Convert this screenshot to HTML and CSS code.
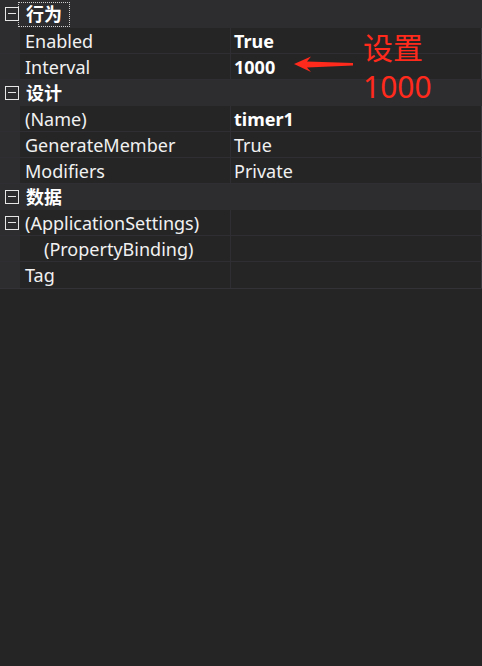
FILE: index.html
```html
<!DOCTYPE html>
<html lang="zh">
<head>
<meta charset="utf-8">
<title>属性</title>
<link rel="stylesheet" href="styles.css">
</head>
<body>
<div class="panel">
  <div class="grid">
    <div class="cat first"><span class="toggle"></span><span class="cat-label focus">行为</span></div>
    <div class="row"><div class="gutter"></div><div class="name">Enabled</div><div class="value bold">True</div></div>
    <div class="row"><div class="gutter"></div><div class="name">Interval</div><div class="value bold">1000</div></div>
    <div class="cat"><span class="toggle"></span><span class="cat-label">设计</span></div>
    <div class="row"><div class="gutter"></div><div class="name">(Name)</div><div class="value bold">timer1</div></div>
    <div class="row"><div class="gutter"></div><div class="name">GenerateMember</div><div class="value">True</div></div>
    <div class="row"><div class="gutter"></div><div class="name">Modifiers</div><div class="value">Private</div></div>
    <div class="cat"><span class="toggle"></span><span class="cat-label">数据</span></div>
    <div class="row"><div class="gutter"><span class="toggle"></span></div><div class="name">(ApplicationSettings)</div><div class="value"></div></div>
    <div class="row"><div class="gutter"></div><div class="name indent">(PropertyBinding)</div><div class="value"></div></div>
    <div class="row"><div class="gutter"></div><div class="name">Tag</div><div class="value"></div></div>
  </div>

  <svg class="arrow" width="62" height="22" viewBox="0 0 62 22" aria-hidden="true">
    <polygon points="0,9 17,1.5 13,6.5 59,8 59,10.5 13,12.5 17,17" fill="#ff2a1c"/>
  </svg>
  <div class="note">
    <span class="note-line">设置</span>
    <span class="note-line">1000</span>
  </div>
</div>
</body>
</html>
```

FILE: styles.css
```css
html, body {
  margin: 0;
  padding: 0;
  background: #252526;
}

body {
  width: 482px;
  height: 666px;
  overflow: hidden;
  font-family: "Noto Sans", "Noto Sans CJK SC", sans-serif;
  font-size: 18px;
  color: #f1f1f1;
}

.panel {
  position: relative;
  width: 482px;
  height: 666px;
}

.grid {
  display: flex;
  flex-direction: column;
  border-bottom: 1px solid #333337;
}

.cat {
  display: flex;
  align-items: center;
  height: 26px;
  background: #2d2d30;
  font-weight: bold;
  color: #ffffff;
}

.cat.first {
  height: 28px;
}

.cat .toggle {
  margin: 0 0 0 5px;
}

.cat-label {
  display: inline-block;
  height: 23px;
  line-height: 23px;
  padding: 0 7px 0 7px;
}

.focus {
  outline: 1px dotted #d0d0d0;
  outline-offset: 0;
}

.toggle {
  position: relative;
  display: inline-block;
  box-sizing: border-box;
  width: 14px;
  height: 14px;
  border: 1px solid #e6e6e6;
  flex: none;
}

.toggle::after {
  content: "";
  position: absolute;
  left: 2px;
  right: 2px;
  top: 5px;
  height: 1px;
  background: #e6e6e6;
}

.row {
  display: grid;
  grid-template-columns: 20px 211px 1fr;
  height: 26px;
  box-sizing: border-box;
  border-bottom: 1px solid #2f2f33;
  background: #252526;
}

.row:last-child {
  border-bottom: none;
}

.gutter {
  background: #2d2d30;
  display: flex;
  align-items: center;
  padding-left: 5px;
}

.name {
  padding: 1px 0 0 5px;
  line-height: 24px;
  border-right: 1px solid #2f2f33;
  white-space: nowrap;
}

.name.indent {
  padding-left: 24px;
}

.value {
  padding: 1px 0 0 3px;
  line-height: 24px;
  border-right: 1px solid #3a3a3e;
  white-space: nowrap;
}

.bold {
  font-weight: bold;
  color: #ffffff;
}

.arrow {
  position: absolute;
  left: 294px;
  top: 55px;
}

.note {
  position: absolute;
  left: 363px;
  top: 28px;
  display: flex;
  flex-direction: column;
  font-family: "Noto Sans", "Noto Sans CJK SC", sans-serif;
  font-size: 30px;
  font-weight: 400;
  color: #ff2a1c;
}

.note-line {
  display: block;
  height: 39px;
  line-height: 39px;
}
```
